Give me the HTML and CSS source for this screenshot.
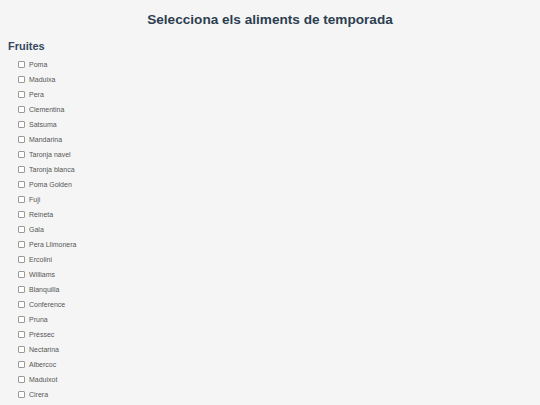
FILE: index.html
```html
<!DOCTYPE html>
<html lang="ca">
<head>
<meta charset="utf-8">
<title>Aliments de temporada</title>
<link rel="stylesheet" href="styles.css">
</head>
<body>
<main class="page">
  <h1 class="title">Selecciona els aliments de temporada</h1>
  <section class="group">
    <h2 class="group-title">Fruites</h2>
    <ul class="list">
      <li class="item"><label><input type="checkbox"><span>Poma</span></label></li>
      <li class="item"><label><input type="checkbox"><span>Maduixa</span></label></li>
      <li class="item"><label><input type="checkbox"><span>Pera</span></label></li>
      <li class="item"><label><input type="checkbox"><span>Clementina</span></label></li>
      <li class="item"><label><input type="checkbox"><span>Satsuma</span></label></li>
      <li class="item"><label><input type="checkbox"><span>Mandarina</span></label></li>
      <li class="item"><label><input type="checkbox"><span>Taronja navel</span></label></li>
      <li class="item"><label><input type="checkbox"><span>Taronja blanca</span></label></li>
      <li class="item"><label><input type="checkbox"><span>Poma Golden</span></label></li>
      <li class="item"><label><input type="checkbox"><span>Fuji</span></label></li>
      <li class="item"><label><input type="checkbox"><span>Reineta</span></label></li>
      <li class="item"><label><input type="checkbox"><span>Gala</span></label></li>
      <li class="item"><label><input type="checkbox"><span>Pera Llimonera</span></label></li>
      <li class="item"><label><input type="checkbox"><span>Ercolini</span></label></li>
      <li class="item"><label><input type="checkbox"><span>Williams</span></label></li>
      <li class="item"><label><input type="checkbox"><span>Blanquilla</span></label></li>
      <li class="item"><label><input type="checkbox"><span>Conference</span></label></li>
      <li class="item"><label><input type="checkbox"><span>Pruna</span></label></li>
      <li class="item"><label><input type="checkbox"><span>Préssec</span></label></li>
      <li class="item"><label><input type="checkbox"><span>Nectarina</span></label></li>
      <li class="item"><label><input type="checkbox"><span>Albercoc</span></label></li>
      <li class="item"><label><input type="checkbox"><span>Maduixot</span></label></li>
      <li class="item"><label><input type="checkbox"><span>Cirera</span></label></li>
    </ul>
  </section>
</main>
</body>
</html>
```
FILE: styles.css
```css
html, body {
  margin: 0;
  padding: 0;
  background: #f5f5f5;
}
body {
  font-family: "Liberation Sans", Arial, sans-serif;
  color: #333;
}
.page {
  padding: 0 8px;
}
.title {
  margin: 0;
  padding-top: 10px;
  text-align: center;
  font-size: 13.6px;
  line-height: 19px;
  font-weight: bold;
  color: #2c3e50;
}
.group-title {
  margin: 11px 0 0 0;
  font-size: 11px;
  line-height: 13px;
  font-weight: bold;
  color: #34495e;
}
.list {
  list-style: none;
  margin: 4px 0 0 0;
  padding: 0 0 0 10px;
}
.item {
  height: 15px;
  display: flex;
  align-items: center;
}
.item label {
  display: flex;
  align-items: center;
  gap: 4px;
  font-size: 7px;
  color: #555;
}
.item input {
  appearance: none;
  -webkit-appearance: none;
  margin: 0;
  width: 7px;
  height: 7px;
  border: 1px solid #9a9a9a;
  border-radius: 1px;
  background: #fff;
  box-sizing: border-box;
}
```
